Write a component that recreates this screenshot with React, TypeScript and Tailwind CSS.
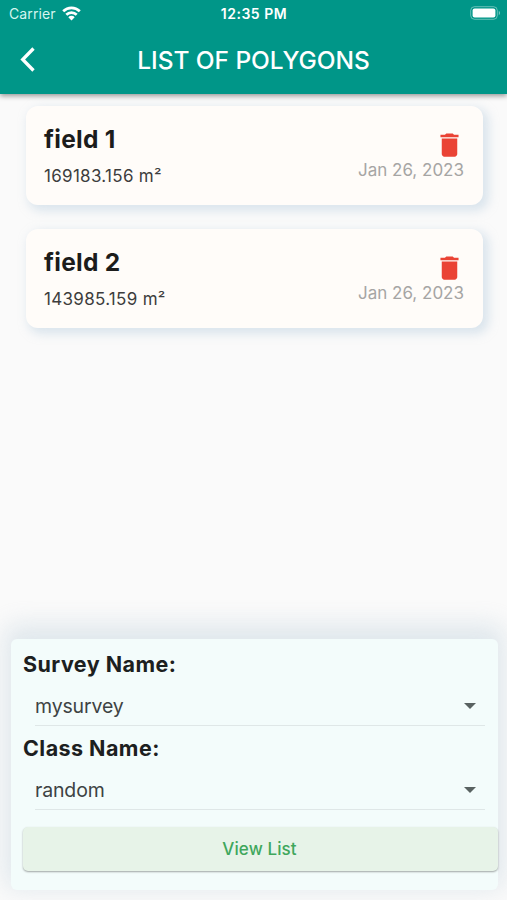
const POLYGONS = [
  { name: "field 1", area: "169183.156 m²", date: "Jan 26, 2023" },
  { name: "field 2", area: "143985.159 m²", date: "Jan 26, 2023" },
];

type Polygon = (typeof POLYGONS)[number];

function StatusBar() {
  return (
    <div className="grid h-[26px] grid-cols-3 items-center pl-[9px] pr-[6px] pt-px">
      <div className="flex items-center gap-[6px]">
        <span className="text-[14px] leading-none tracking-[0.1px] text-[#d5f5ef]">
          Carrier
        </span>
        <svg className="-mt-px" width="19" height="15" viewBox="0 0 19 15" fill="none" stroke="#fff" strokeWidth="2.7">
          <path d="M1.2 5.3a11.8 11.8 0 0 1 16.6 0" />
          <path d="M4.3 8.7a7.4 7.4 0 0 1 10.4 0" />
          <path d="M9.5 14.4 6.3 11.2a4.5 4.5 0 0 1 6.4 0z" fill="#fff" stroke="none" />
        </svg>
      </div>
      <span className="-ml-[2px] text-center text-[14px] font-semibold leading-none tracking-[0.5px]">
        12:35 PM
      </span>
      <svg className="-mt-px justify-self-end" width="31" height="14" viewBox="0 0 31 14">
        <rect x="0.7" y="0.7" width="26.6" height="12.6" rx="3.8" fill="none" stroke="#fff" strokeOpacity="0.4" />
        <rect x="2.6" y="2.5" width="22.8" height="9" rx="2" fill="#fff" />
        <path d="M28.8 4.8c1.6.7 1.6 3.7 0 4.4z" fill="#fff" fillOpacity="0.5" />
      </svg>
    </div>
  );
}

function PolygonCard({ polygon }: { polygon: Polygon }) {
  return (
    <div className="flex h-[99px] justify-between rounded-[12px] bg-[#fffcf9] pl-[18px] pr-[19px] shadow-[4px_4px_10px_2px_rgba(190,210,225,0.5)]">
      <div className="pt-[18px]">
        <h2 className="text-[24.5px] font-bold leading-[30px] tracking-[0.3px] text-[#1c1c1c]">
          {polygon.name}
        </h2>
        <p className="mt-[12px] text-[17px] leading-[20px] tracking-[0.3px] text-[#3d3d3d]">
          {polygon.area}
        </p>
      </div>
      <div className="flex flex-col items-end pt-[23px]">
        <svg className="-mr-px" width="31" height="31" viewBox="0 -0.4 24 24" fill="#ea4335">
          <path d="M6 19c0 1.1.9 2 2 2h8c1.1 0 2-.9 2-2V7H6v12zM19 4h-3.5l-1-1h-5l-1 1H5v2h14V4z" />
        </svg>
        <p className="text-[17px] leading-[20px] text-[#a6a5a4]">
          {polygon.date}
        </p>
      </div>
    </div>
  );
}

function SelectField({ label, value }: { label: string; value: string }) {
  return (
    <div className="h-[84px]">
      <h3 className="pl-[12px] text-[21.5px] font-bold leading-[26px] tracking-[0.45px] text-[#1c2020]">
        {label}
      </h3>
      <div className="ml-[24px] mr-[13px] mt-[10px] flex h-[39px] items-center justify-between border-b border-[#dfe7e7] pr-[9px]">
        <span className="text-[19.5px] leading-[24px] tracking-[-0.15px] text-[#3d4343]">
          {value}
        </span>
        <svg width="12" height="6" viewBox="0 0 12 6" fill="#596261">
          <path d="M0 0h12L6 6z" />
        </svg>
      </div>
    </div>
  );
}

export default function App() {
  return (
    <div className="flex h-[900px] w-full flex-col overflow-hidden bg-[#fafafa] font-['Inter',sans-serif]">
      <header className="relative h-[94px] shrink-0 bg-[#009688] text-white shadow-[0_2px_5px_rgba(0,0,0,0.4)]">
        <StatusBar />
        <div className="grid h-[67px] grid-cols-[60px_1fr_60px] items-center">
          <button className="pl-[20px]">
            <svg width="16" height="25" viewBox="0 0 16 25" fill="none" stroke="#fff" strokeWidth="3.3">
              <path d="M13.5 1.5 2.7 12.5l10.8 11" />
            </svg>
          </button>
          <h1 className="text-center text-[24.5px] font-medium leading-[30px] tracking-[-0.05px]">
            LIST OF POLYGONS
          </h1>
        </div>
      </header>

      <main className="flex flex-1 flex-col gap-[24px] pl-[26px] pr-[24px] pt-[12px]">
        {POLYGONS.map((polygon) => (
          <PolygonCard key={polygon.name} polygon={polygon} />
        ))}
      </main>

      <section className="mb-[10px] ml-[11px] mr-[9px] h-[251px] shrink-0 rounded-[6px] bg-[#f3fcfb] pt-[12px] shadow-[0_-8px_24px_6px_rgba(190,208,220,0.45)]">
        <SelectField label="Survey Name:" value="mysurvey" />
        <SelectField label="Class Name:" value="random" />
        <button className="ml-[12px] mt-[8px] flex h-[44px] w-[475px] items-center justify-center rounded-[5px] bg-[#e7f3e8] pr-[2px] pt-px text-[17px] font-medium tracking-[0.1px] text-[#3fa75c] shadow-[0_1px_2px_rgba(0,0,0,0.35)]">
          View List
        </button>
      </section>
    </div>
  );
}
